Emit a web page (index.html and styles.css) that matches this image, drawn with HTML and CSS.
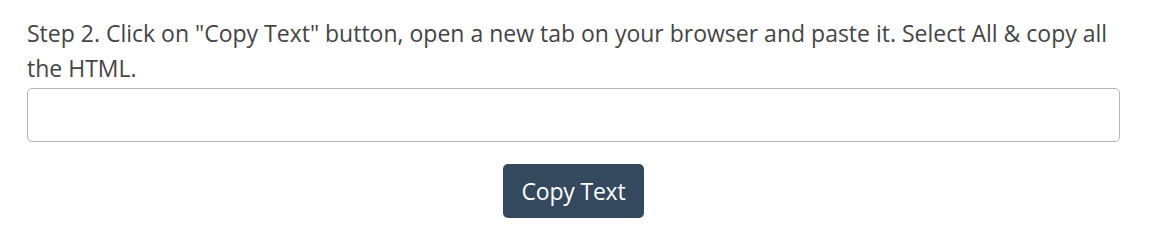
FILE: index.html
```html
<!DOCTYPE html>
<html>
<head>
<meta charset="utf-8">
<link rel="stylesheet" href="styles.css">
</head>
<body>
<div class="step">
  <p class="step-text">Step 2. Click on "Copy Text" button, open a new tab on your browser and paste it. Select All &amp; copy all the HTML.</p>
  <input class="html-field" type="text">
  <div class="actions">
    <button class="copy-btn" type="button">Copy Text</button>
  </div>
</div>
</body>
</html>
```

FILE: styles.css
```css
* { box-sizing: border-box; }
body {
  margin: 0;
  background: #fff;
  font-family: "Open Sans", "Noto Sans", sans-serif;
}
.step {
  padding: 16px 29px 0 27px;
}
.step-text {
  margin: 0;
  font-size: 23px;
  line-height: 35px;
  color: #454545;
}
.html-field {
  display: block;
  width: 100%;
  height: 54px;
  margin-top: 2px;
  border: 1px solid #b5b5b5;
  border-radius: 5px;
  font: inherit;
}
.actions {
  display: flex;
  justify-content: center;
  margin-top: 22px;
}
.copy-btn {
  width: 141px;
  height: 54px;
  border: 0;
  border-radius: 5px;
  background: #34495e;
  color: #fff;
  font-family: inherit;
  font-size: 23px;
  letter-spacing: -0.2px;
  padding: 0;
}
```
